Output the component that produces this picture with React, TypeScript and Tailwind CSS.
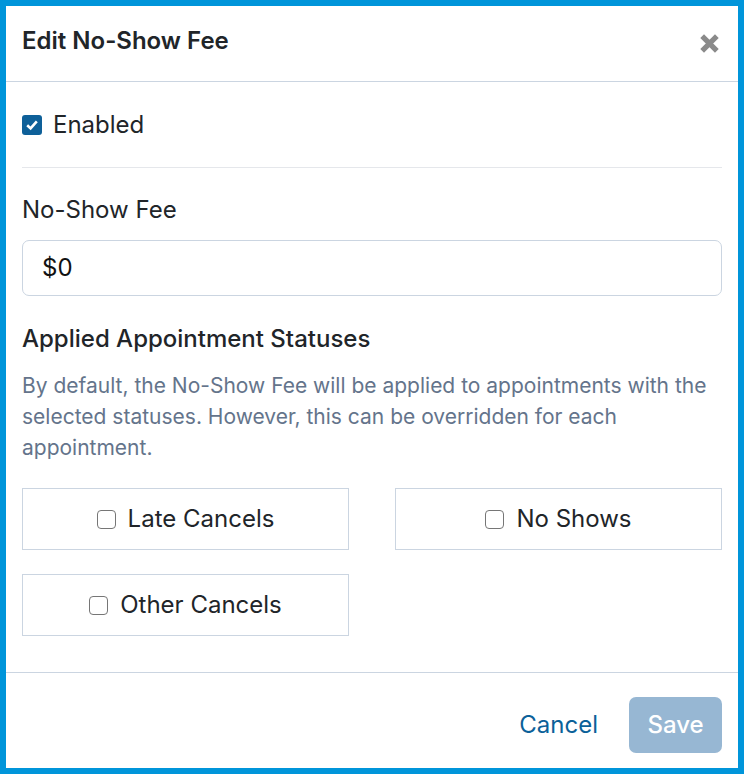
import React from "react";

function Box({ label }: { label: string }) {
  return (
    <div className="h-[62px] border border-[#cbd5e1] flex items-center justify-center gap-[12px]">
      <span className="w-[19px] h-[19px] rounded-[4px] border-[1.5px] border-[#767676] bg-white" />
      <span className="text-[24px] leading-[36px] text-[#212529]">{label}</span>
    </div>
  );
}

export default function App() {
  return (
    <div
      className="w-[744px] h-[774px] border-[6px] border-[#0095da] bg-white flex flex-col"
      style={{ fontFamily: "Inter, 'Noto Sans', sans-serif" }}
    >
      <div className="h-[76px] shrink-0 border-b border-[#cbd5e1] pl-[16px] pr-[18px] flex items-center justify-between">
        <h1 className="text-[24px] font-semibold text-[#212529] -mt-[6px]">Edit No-Show Fee</h1>
        <svg width="21" height="21" viewBox="0 0 20 20" className="-mt-[1px]">
          <path d="M3 3 L17 17 M17 3 L3 17" stroke="#8a8a8a" strokeWidth="5" strokeLinecap="butt" />
        </svg>
      </div>
      <div className="flex-1 px-[16px] pt-[25px]">
        <div className="flex items-center gap-[11px] h-[36px]">
          <span className="w-[20px] h-[20px] rounded-[3px] bg-[#0e6099] flex items-center justify-center">
            <svg width="14" height="14" viewBox="0 0 14 14">
              <path d="M2.2 7.2 L5.6 10.4 L11.8 3.4" stroke="white" strokeWidth="2.6" fill="none" />
            </svg>
          </span>
          <span className="text-[24px] leading-[36px] text-[#212529]">Enabled</span>
        </div>
        <div className="mt-[24px] h-px bg-[#e5e7eb]" />
        <div className="mt-[24px] text-[24px] leading-[36px] text-[#212529]">No-Show Fee</div>
        <div className="mt-[12px] h-[56px] rounded-[7px] border border-[#cbd5e1] flex items-center px-[19px] text-[24px] text-[#111]">
          $0
        </div>
        <div className="mt-[25px] text-[24px] leading-[36px] font-medium text-[#212529]">Applied Appointment Statuses</div>
        <p className="mt-[13px] text-[21px] leading-[31px] text-[#64748b]">
          By default, the No-Show Fee will be applied to appointments with the selected statuses. However, this can be overridden for each appointment.
        </p>
        <div className="mt-[25px] grid grid-cols-2 gap-x-[46px] gap-y-[24px]">
          <Box label="Late Cancels" />
          <Box label="No Shows" />
          <Box label="Other Cancels" />
        </div>
      </div>
      <div className="shrink-0 border-t border-[#cbd5e1] pt-[24px] pb-[15px] px-[16px] flex items-center justify-end">
        <button className="text-[24px] text-[#0b6199] mr-[31px]">Cancel</button>
        <button className="h-[56px] w-[93px] rounded-[7px] bg-[#97b7d3] text-white text-[24px] font-medium">Save</button>
      </div>
    </div>
  );
}
